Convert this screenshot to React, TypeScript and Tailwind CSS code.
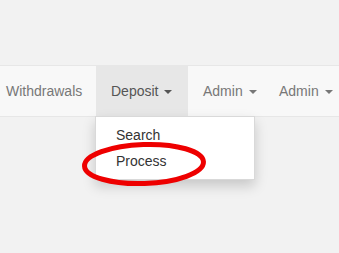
import React from "react";

const Caret = () => (
  <span className="ml-[2px] inline-block h-0 w-0 border-x-[4px] border-t-[4px] border-x-transparent border-t-current align-middle" />
);

const NavItem = ({ label, caret, active, width }: { label: string; caret?: boolean; active?: boolean; width: string }) => (
  <li className={`${width} h-[50px] shrink-0 ${active ? "bg-[#e7e7e7] text-[#555]" : "text-[#777]"}`}>
    <a className="block whitespace-nowrap py-[15px] pl-[15px] leading-5">
      {label}
      {caret && " "}
      {caret && <Caret />}
    </a>
  </li>
);

export default function App() {
  return (
    <div className="h-[253px] w-[339px] overflow-hidden bg-[#f2f2f2] pt-[65px] text-[14px] font-['Liberation_Sans',Arial,sans-serif]">
      <nav className="relative border-y border-[#e7e7e7] bg-[#f8f8f8]">
        <ul className="ml-[-9px] flex">
          <NavItem label="Withdrawals" width="w-[105px]" />
          <li className="relative h-[50px] w-[92px] shrink-0 bg-[#e7e7e7] text-[#555]">
            <a className="block whitespace-nowrap py-[15px] pl-[15px] leading-5">
              Deposit <Caret />
            </a>
            <ul className="absolute left-[-1px] top-full z-10 w-[160px] border border-[rgba(0,0,0,0.15)] bg-white py-[5px] shadow-[0_6px_12px_rgba(0,0,0,0.175)]">
              <li className="px-5 py-[3px] leading-5 text-[#333]">Search</li>
              <li className="px-5 py-[3px] leading-5 text-[#333]">Process</li>
            </ul>
          </li>
          <NavItem label="Admin" caret width="w-[76px]" />
          <NavItem label="Admin" caret width="w-[90px]" />
        </ul>
        <svg className="absolute left-[78px] top-[72px] z-20" width="134" height="52" viewBox="0 0 134 52">
          <ellipse cx="66" cy="26" rx="59.5" ry="19.5" fill="none" stroke="#ee0000" strokeWidth="5" transform="rotate(-2 66 26)" />
        </svg>
      </nav>
    </div>
  );
}
